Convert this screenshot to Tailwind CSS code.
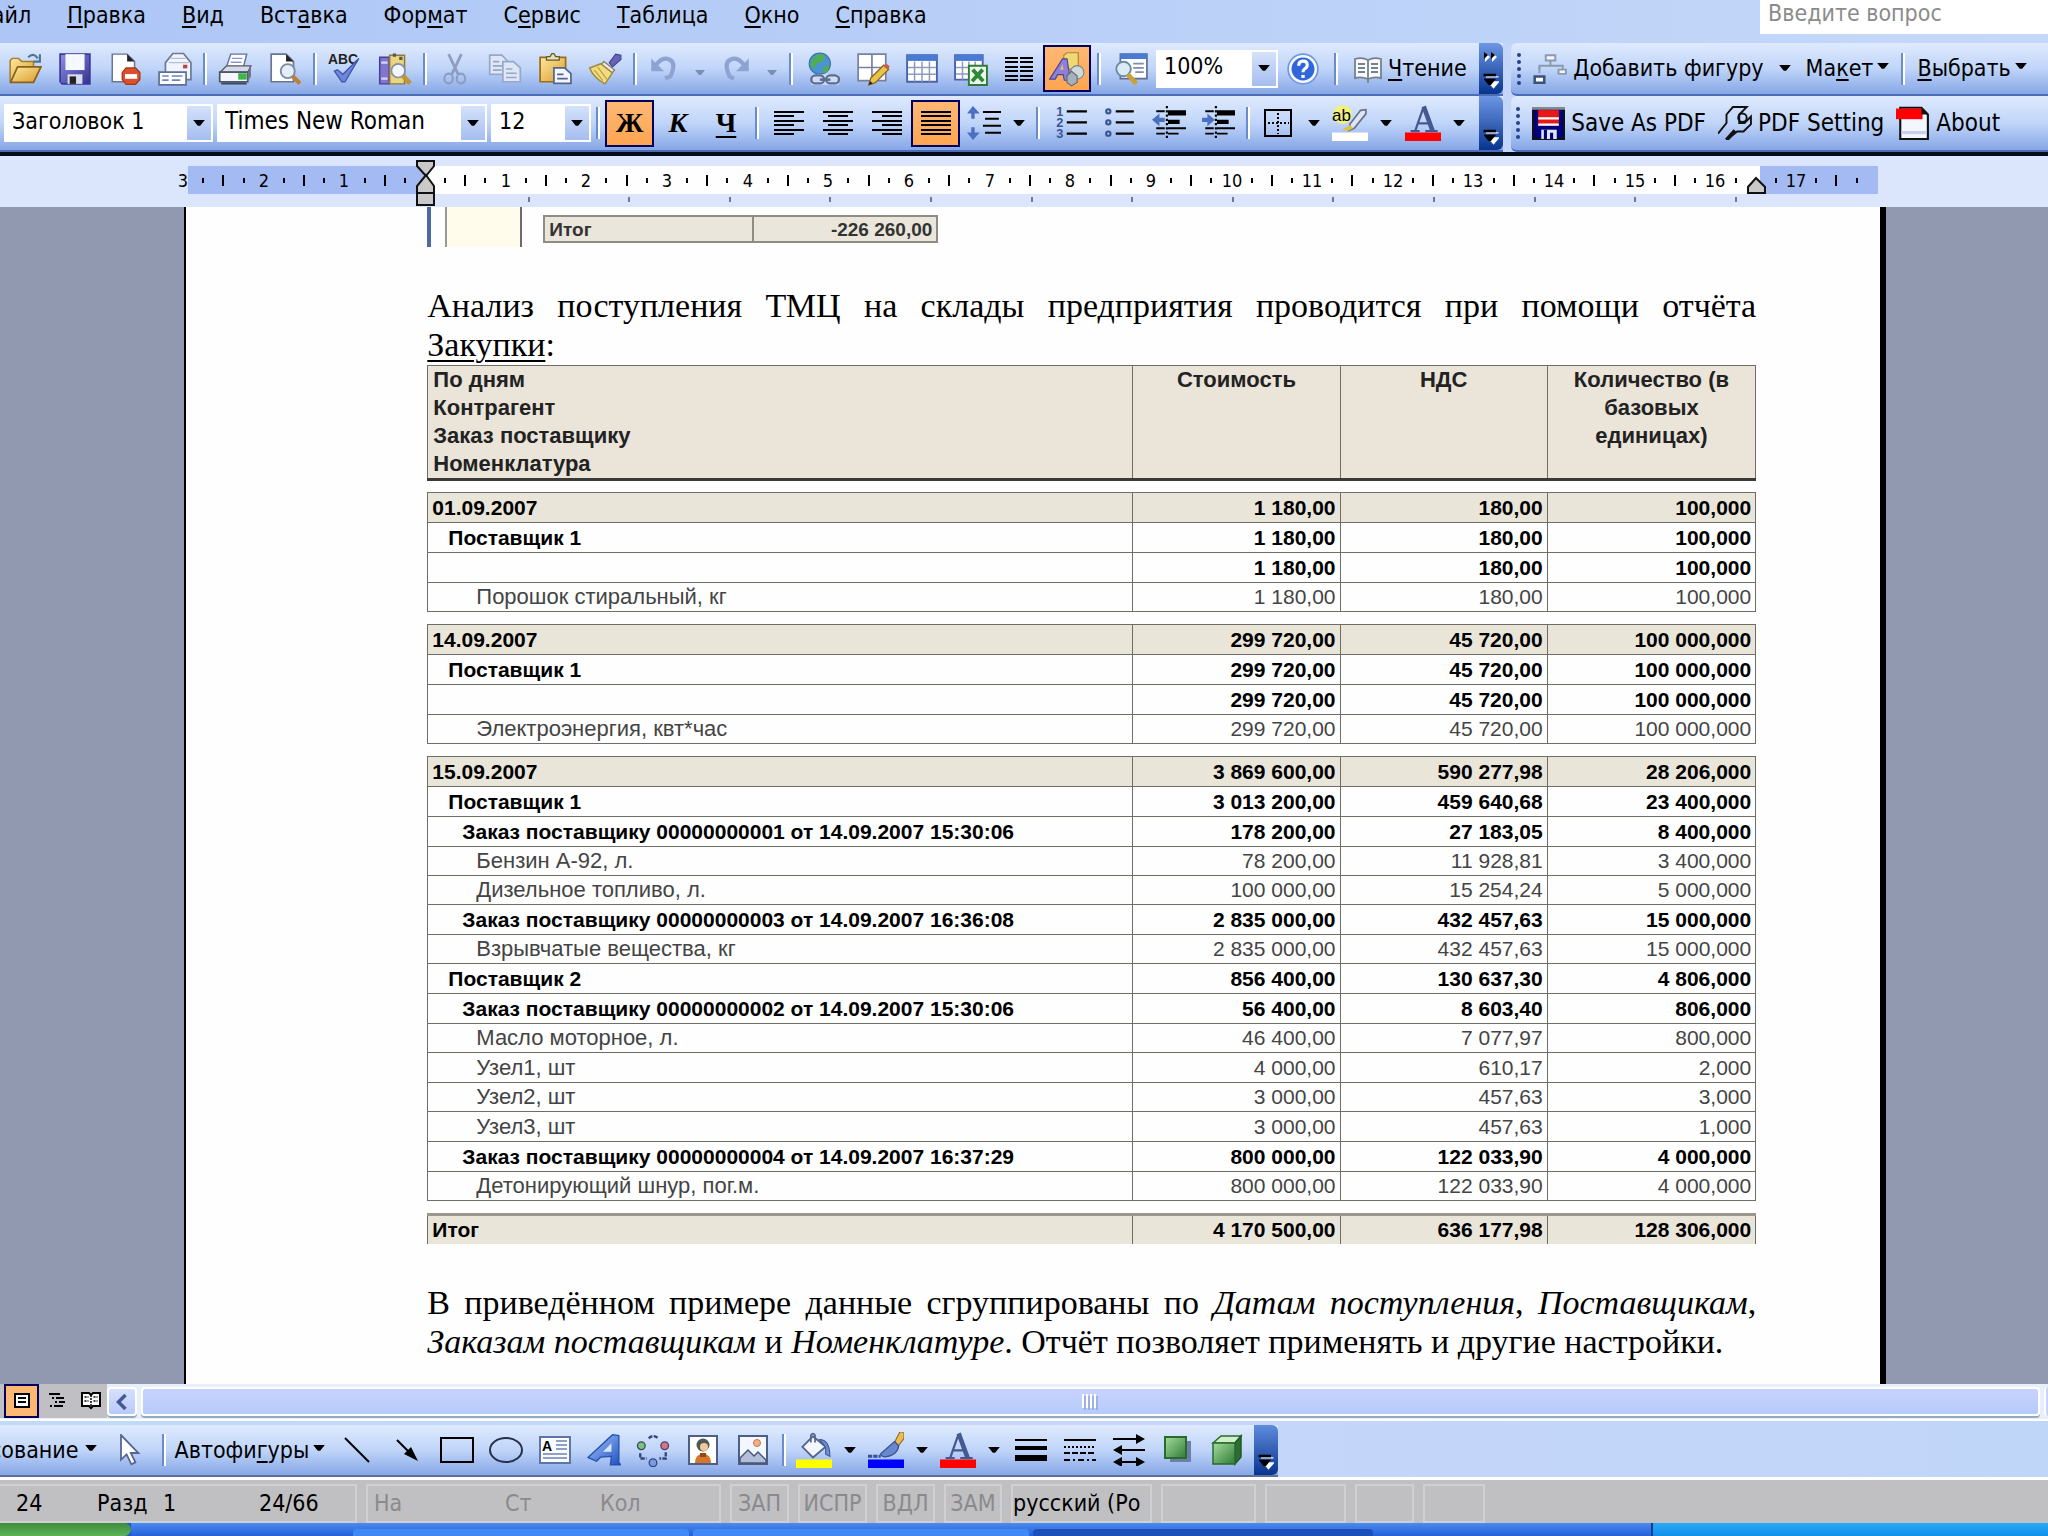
<!DOCTYPE html>
<html lang="ru">
<head>
    <meta charset="UTF-8">
    <meta name="viewport" content="width=device-width, initial-scale=1.0">
    <title>Анализ поступления ТМЦ - Microsoft Word</title>
    <script src="https://cdn.jsdelivr.net/npm/@tailwindcss/browser@4"></script>
</head>
<body class="h-screen flex flex-col overflow-hidden bg-[#c4d6f8] font-['DejaVu_Sans_Condensed','Liberation_Sans',sans-serif] text-[23px] leading-none text-black whitespace-nowrap">
    <!-- Shared symbols -->
    <svg class="absolute size-0">
        <defs>
            <linearGradient id="gold" x2="1" y2="1"><stop stop-color="#ffe9a0"/><stop offset="1" stop-color="#d99a2b"/></linearGradient>
            <linearGradient id="violet" x2="1" y2="1"><stop stop-color="#8f90e6"/><stop offset="1" stop-color="#33318f"/></linearGradient>
            <linearGradient id="green" x2="1" y2="1"><stop stop-color="#a5dc9c"/><stop offset="1" stop-color="#2f7a35"/></linearGradient>
            <linearGradient id="blue" x2="1" y2="1"><stop stop-color="#a9c6fb"/><stop offset="1" stop-color="#1d4fc0"/></linearGradient>
            <symbol id="arrow" viewBox="0 0 10 6"><path d="M0 0h10L6 5H4z"/></symbol>
            <symbol id="more" viewBox="0 0 12 16"><path d="M2 5h10v1H2zM3 9h10l-5 6z" fill="#fff"/><path d="M0 3h10v2H0zM0 7h10L6 12H4z" fill="#000"/></symbol>
            <symbol id="letterA" viewBox="0 0 16 12"><path d="M2.500 11.500h4M9 11.500h5.500M4.500 11.500L8 1.500M6 8h5" fill="none" stroke="#44598f" stroke-width="1"/><path d="M8.300 .5l4 11" stroke="#44598f" stroke-width="2"/></symbol>
        </defs>
    </svg>

    <!-- Menu -->
    <header class="flex h-[43px] items-start justify-between bg-linear-to-r from-[#adc6f6] to-[#c5d8f9]">
        <nav class="-ml-[26px] flex gap-9 pt-[3px] leading-6 underline-offset-3">
            <a href="#">Файл</a>
            <a href="#"><u>П</u>равка</a>
            <a href="#"><u>В</u>ид</a>
            <a href="#">Вст<u>а</u>вка</a>
            <a href="#">Фор<u>м</u>ат</a>
            <a href="#">С<u>е</u>рвис</a>
            <a href="#"><u>Т</u>аблица</a>
            <a href="#"><u>О</u>кно</a>
            <a href="#"><u>С</u>правка</a>
        </nav>
        <input type="text" aria-label="Введите вопрос" placeholder="Введите вопрос" class="h-[34px] w-[288px] bg-white px-2 pb-2 placeholder:text-[#8b8b8b]">
    </header>

    <!-- Toolbars, first row -->
    <div class="flex h-[53px] gap-2">
        <div class="flex w-[73.4%] shrink-0 items-center border-b-2 border-[#4a6db5] bg-linear-to-b from-[#dfeafe] via-[#c0d5f9] to-[#86a6e6]">
            <button aria-label="Открыть" class="grid h-full w-[50px] place-items-center"><svg class="size-[34px]" viewBox="0 0 16 16"><path d="M1 14V4l1-1h3l1.500 1.500H12V7" fill="url(#gold)" stroke="#a27b2c" stroke-width=".7"/><path d="M1.200 14.300L4.500 7h11L12 14.300z" fill="url(#gold)" stroke="#86621c" stroke-width=".8"/><path d="M9.500 2.500Q12 0 14 3M15 1v3.500h-3" fill="none" stroke="#4f7391" stroke-width="1"/></svg></button>
            <button aria-label="Сохранить" class="grid h-full w-[50px] place-items-center"><svg class="size-[34px]" viewBox="0 0 16 16"><path d="M1 1h14v14H2l-1-1z" fill="url(#violet)" stroke="#3a3a96" stroke-width=".8"/><path d="M3.500 1h9v7.500h-9z" fill="#f6f8ff"/><path d="M4.500 10.500h7V15h-7z" fill="#d9dcea"/><path d="M5.500 11.500h3V15h-3z" fill="#222"/></svg></button>
            <button aria-label="Разрешения" class="grid h-full w-[50px] place-items-center"><svg class="size-[34px]" viewBox="0 0 16 16"><path d="M2 1h7l3.500 3.500V14H2z" fill="#fff" stroke="#697591" stroke-width=".7"/><path d="M9 1v3.500h3.500z" fill="#222"/><path d="M8.500 7.500h4.500L15 9.700v3.300L13 15.200H8.500L6.700 13V9.700z" fill="#d9512f" stroke="#a93418" stroke-width=".6"/><path d="M8 10.400h5.700v2.200H8z" fill="#fff"/></svg></button>
            <button aria-label="Почта" class="grid h-full w-[50px] place-items-center"><svg class="size-[34px]" viewBox="0 0 16 16"><path d="M3.500 5L7 .7h5L15.500 5v8h-12z" fill="#f1f4fc" stroke="#6b7896" stroke-width=".8"/><path d="M5 5h9.500M6 3h7" stroke="#b3bfd8" stroke-width=".7"/><path d="M11.800 6h2v1.700h-2z" fill="#b04545"/><path d="M.5 9.500h12.700v6H.5z" fill="#fff" stroke="#5c6f94" stroke-width=".8"/><path d="M2 11.300h3M2 13.200h3M6.500 11.300h5M6.500 13.200h4" stroke="#6b86b8" stroke-width=".8"/></svg></button>
            <span class="flex w-[10px] justify-center"><i class="h-8 w-1 border-l-2 border-r-2 border-l-[#6a8ccb] border-r-white"></i></span>
            <button aria-label="Печать" class="grid h-full w-[50px] place-items-center"><svg class="size-[34px]" viewBox="0 0 16 16"><path d="M4 7l2-6h7.500L12 7z" fill="#fff" stroke="#6272a4" stroke-width=".7"/><path d="M6.500 3h5M6 4.800h5" stroke="#8c95c9" stroke-width=".7"/><path d="M1 9.500L4 6.500h11.500L14 9.500z" fill="#d4dbe9" stroke="#556" stroke-width=".6"/><path d="M.8 9.500H14V14H.8z" fill="#f4f6fb" stroke="#4b5566" stroke-width=".8"/><path d="M14 9.500l1.500-3v5L14 14z" fill="#6d7686"/><path d="M9.500 10h4v3h-4z" fill="#3fb54a"/><path d="M1.500 14.800h12" stroke="#3d4a5c" stroke-width="1"/></svg></button>
            <button aria-label="Предварительный просмотр" class="grid h-full w-[50px] place-items-center"><svg class="size-[34px]" viewBox="0 0 16 16"><path d="M1.500 1h7L12 4.500V14H1.500z" fill="#fff" stroke="#697591" stroke-width=".8"/><path d="M8.500 1v3.500H12z" fill="#222"/><circle cx="9.300" cy="9" r="3.300" fill="#e4edfa" stroke="#7c8aa5" stroke-width=".9"/><path d="M11.700 11.500l3.300 3.300" stroke="#c17e33" stroke-width="2"/></svg></button>
            <span class="flex w-[10px] justify-center"><i class="h-8 w-1 border-l-2 border-r-2 border-l-[#6a8ccb] border-r-white"></i></span>
            <button aria-label="Правописание" class="grid h-full w-[50px] place-items-center"><svg class="size-[34px]" viewBox="0 0 16 16"><text x="0" y="5.500" font-size="6.500" font-weight="bold" font-family="Liberation Sans" fill="#222">ABC</text><path d="M3 9l1.500-.7L7 10.500 14.500 3 8 14H6.500z" fill="#6f86da" stroke="#3f55ae" stroke-width=".6"/></svg></button>
            <button aria-label="Справочные материалы" class="grid h-full w-[50px] place-items-center"><svg class="size-[34px]" viewBox="0 0 16 16"><path d="M.8 2.500h4.500V15H.8z" fill="#8175cf" stroke="#483f96" stroke-width=".7"/><path d="M1.500 5h3M1.500 12.500h3" stroke="#d9d4ff"/><path d="M5.500 1.500h7V15h-7z" fill="#e9d582" stroke="#8e7a34" stroke-width=".7"/><path d="M7 1.500h1.500M10 3h1.500" stroke="#555" stroke-width="1.500"/><circle cx="9.500" cy="8.800" r="3.200" fill="#f3f6fd" stroke="#848fa8" stroke-width=".8"/><path d="M11.800 11.300l3.300 3.500" stroke="#c09335" stroke-width="2.200"/></svg></button>
            <span class="flex w-[10px] justify-center"><i class="h-8 w-1 border-l-2 border-r-2 border-l-[#6a8ccb] border-r-white"></i></span>
            <button aria-label="Вырезать" class="grid h-full w-[50px] place-items-center"><svg class="size-[34px]" viewBox="0 0 16 16" fill="none" stroke="#8d9dc0"><path d="M5 1l4.500 9.500M11 1L6.500 10.500" stroke-width="1.300"/><ellipse cx="5" cy="12.500" rx="2" ry="2.300"/><ellipse cx="10.800" cy="12.500" rx="2" ry="2.300"/></svg></button>
            <button aria-label="Копировать" class="grid h-full w-[50px] place-items-center"><svg class="size-[34px]" viewBox="0 0 16 16" fill="#dfe7f7" stroke="#98a7c8" stroke-width=".8"><path d="M.8 1.500h5.700L9 4v6.500H.8z"/><path d="M2.300 4.500h3M2.300 6.500h5M2.300 8.500h4"/><path d="M7 4.500h5L15.200 7.500V14H7z"/><path d="M8.500 8h3M8.500 10h5M8.500 12h5"/></svg></button>
            <button aria-label="Вставить" class="grid h-full w-[50px] place-items-center"><svg class="size-[34px]" viewBox="0 0 16 16"><path d="M1 2.500h12V14H1z" fill="url(#gold)" stroke="#9a6d16" stroke-width=".8"/><path d="M4 3.800V2.200h1.700L6.500.8h1l.8 1.400H10v1.600z" fill="#e7dfb8" stroke="#665a2d" stroke-width=".6"/><path d="M7.500 7.500h5l3 2.700v4.600h-8z" fill="#f4f7ff" stroke="#53648e" stroke-width=".8"/><path d="M9 10.500h3M9 12.500h5" stroke="#53648e" stroke-width=".8"/></svg></button>
            <button aria-label="Формат по образцу" class="grid h-full w-[50px] place-items-center"><svg class="size-[34px]" viewBox="0 0 16 16"><path d="M10 5l3-4 2.500.5v2L11.500 7z" fill="#6562b8" stroke="#46438d" stroke-width=".5"/><path d="M7.500 4.500L12.500 8.500l-1.300 1.500L6 6z" fill="#e8eaf5" stroke="#84805a" stroke-width=".6"/><path d="M6 5.500L.8 7.500Q2.500 12 8 15l3.500-5.200z" fill="#f1dc82" stroke="#a18a3a" stroke-width=".7"/><path d="M4.500 7l4.500 6M3 8.500l4 5" stroke="#b89b3d" stroke-width=".5"/></svg></button>
            <span class="flex w-[10px] justify-center"><i class="h-8 w-1 border-l-2 border-r-2 border-l-[#6a8ccb] border-r-white"></i></span>
            <button aria-label="Отменить" class="grid h-full w-[48px] place-items-center"><svg class="size-[34px]" viewBox="0 0 16 16" fill="none" stroke="#8ea3cf" stroke-width="2"><path d="M4 6.500Q7 2 10.500 3.500T11 11.500L8.500 12.500"/><path d="M2 3v6h6z" fill="#8ea3cf" stroke="none"/></svg></button>
            <button aria-label="Список отмены" class="grid h-full w-[24px] place-items-center fill-[#7d8db3] pt-2"><svg class="h-[6px] w-[12px]"><use href="#arrow"/></svg></button>
            <button aria-label="Вернуть" class="grid h-full w-[48px] place-items-center"><svg class="size-[34px]" viewBox="0 0 16 16" fill="none" stroke="#8ea3cf" stroke-width="2"><path d="M12 6.500Q9 2 5.500 3.500T5 11.500L7 12.500"/><path d="M14 3v6H8z" fill="#8ea3cf" stroke="none"/></svg></button>
            <button aria-label="Список возврата" class="grid h-full w-[24px] place-items-center fill-[#7d8db3] pt-2"><svg class="h-[6px] w-[12px]"><use href="#arrow"/></svg></button>
            <span class="flex w-[14px] justify-center"><i class="h-8 w-1 border-l-2 border-r-2 border-l-[#6a8ccb] border-r-white"></i></span>
            <button aria-label="Гиперссылка" class="grid h-full w-[50px] place-items-center"><svg class="size-[34px]" viewBox="0 0 16 16"><circle cx="6.500" cy="5.500" r="5" fill="#4a93d8" stroke="#3b6f9b" stroke-width=".5"/><path d="M3 3q3-3 6-1.500l-1 3-3 1-1 2.500-2-1.500zM8 7l3-1-1 3.500-2 .5z" fill="#4fae55"/><path d="M2.500 10.500h13v5h-13z" fill="#e9effc" opacity=".6"/><rect x="2.500" y="11" width="6" height="3.800" rx="1.900" fill="none" stroke="#5b6d92" stroke-width="1.100"/><rect x="9.500" y="11" width="6" height="3.800" rx="1.900" fill="none" stroke="#5b6d92" stroke-width="1.100"/><path d="M6.500 13h5" stroke="#5b6d92" stroke-width="1.200"/></svg></button>
            <button aria-label="Таблицы и границы" class="grid h-full w-[49px] place-items-center"><svg class="size-[34px]" viewBox="0 0 16 16"><path d="M1 1h13v12.500H1z" fill="#fff" stroke="#7782a0" stroke-width=".8"/><path d="M7.500 1v12.500M1 7.300h13" stroke="#7782a0" stroke-width=".8"/><path d="M6 15.500l1-3.300 6-6 2.300 2-6.200 6.200z" fill="#eac34c" stroke="#8b6b1b" stroke-width=".6"/><path d="M13 6.200l2.300 2 .5-1.500-1.500-1.200z" fill="#d05656"/><path d="M6 15.500l.6-1.900 1.300 1.200z" fill="#222"/></svg></button>
            <button aria-label="Добавить таблицу" class="grid h-full w-[49px] place-items-center"><svg class="size-[34px]" viewBox="0 0 16 16"><path d="M1 1.500h14V14H1z" fill="#fff" stroke="#4a63a5" stroke-width=".9"/><path d="M1 1.200h14v3H1z" fill="#4b79d6"/><path d="M1.500 7.300h13M1.500 10.500h13M4.500 4.500V14M8 4.500V14M11.500 4.500V14" stroke="#8d9abb" stroke-width=".7"/></svg></button>
            <button aria-label="Добавить таблицу Excel" class="grid h-full w-[49px] place-items-center"><svg class="size-[34px]" viewBox="0 0 16 16"><path d="M.5 1.500h13V13H.5z" fill="#fff" stroke="#4a63a5" stroke-width=".9"/><path d="M.5 1.200h13.200v3H.5z" fill="#4b79d6"/><path d="M1 7.300h12M1 10.300h12M4 4.500V13M7 4.500V13M10 4.500V13" stroke="#8d9abb" stroke-width=".7"/><path d="M7 6.500h8.500v9H7z" fill="#eef7ee" stroke="#2f7a35" stroke-width=".9"/><path d="M8.800 8.300l5 5.500M13.500 8.300l-5 5.500" stroke="#2f8a38" stroke-width="1.800"/></svg></button>
            <button aria-label="Колонки" class="grid h-full w-[48px] place-items-center"><svg class="h-[26px] w-7" viewBox="0 0 28 26" stroke="#000" stroke-width="2"><path d="M0 2h13M15 2h13M0 6h13M15 6h13M0 11h13M15 11h13M0 15h13M15 15h13M0 20h13M15 20h13M0 24h13M15 24h13"/></svg></button>
            <button aria-label="Рисование" aria-pressed="true" class="grid h-[47px] w-[48px] place-items-center border-2 border-[#000060] bg-linear-to-b from-[#fdb873] to-[#ffa551]"><svg class="size-[36px]" viewBox="0 0 16 16"><path d="M6.500 2L8 .8h5V7.500L7 8.500z" fill="#f0d873" stroke="#a3873a" stroke-width=".5"/><path d="M.3 12.500l5.700-9h2L9.500 13H6.800L6.300 10.500H3.800l-1 2z" fill="#8c80d8" stroke="#4b4399" stroke-width=".5"/><path d="M5 8.300l1-2.500.4 2.500z" fill="#fdb873"/><circle cx="12.500" cy="9.500" r="3" fill="#cfd8dc" stroke="#7a858b" stroke-width=".5"/><path d="M8 11l2-2 2.500 2v3L10 15.500 8 14z" fill="#a6b0b8" stroke="#667" stroke-width=".5"/></svg></button>
            <span class="flex w-[15px] justify-center"><i class="h-8 w-1 border-l-2 border-r-2 border-l-[#6a8ccb] border-r-white"></i></span>
            <button aria-label="Схема документа" class="grid h-full w-[50px] place-items-center"><svg class="size-[34px]" viewBox="0 0 16 16"><path d="M3 1h12.500v11.500H3z" fill="#fff" stroke="#5c6c97" stroke-width=".8"/><path d="M3 .8h12.500v2.500H3z" fill="#4b79d6"/><path d="M9 5.500h5M9 7.500h5M10 9.500h4" stroke="#7e8db0" stroke-width=".8"/><circle cx="4.500" cy="8" r="3.400" fill="#d8ebf7" stroke="#6f8aa3" stroke-width=".9"/><path d="M6.500 10.500l4 4.500" stroke="#c9a238" stroke-width="2.200"/></svg></button>
            <div class="relative h-[38px] w-[122px] bg-white">
                <select aria-label="Масштаб" class="h-full w-full appearance-none pl-2 pb-1"><option>100%</option></select>
                <span class="pointer-events-none absolute inset-y-[2px] right-[2px] grid w-6 place-items-center bg-linear-to-b from-[#d5e2fa] to-[#a5bdf0]"><svg class="h-[7px] w-[12px]"><use href="#arrow"/></svg></span>
            </div>
            <button aria-label="Справка" class="grid h-full w-[50px] place-items-center"><svg class="size-[34px]" viewBox="0 0 16 16"><circle cx="8" cy="8" r="7" fill="#f4f8ff" stroke="#6f96e2" stroke-width=".8"/><circle cx="8" cy="8" r="5.400" fill="#2f66d9"/><path d="M6 6.500Q6 4.300 8 4.300t2 1.800Q10 7.200 8.700 8 8 8.500 8 9.500" fill="none" stroke="#fff" stroke-width="1.500"/><path d="M7.200 10.800h1.600v1.400H7.200z" fill="#fff"/></svg></button>
            <span class="flex w-4 justify-center"><i class="h-8 w-1 border-l-2 border-r-2 border-l-[#6a8ccb] border-r-white"></i></span>
            <button class="flex h-full items-center gap-1 pl-2"><svg class="size-[32px]" viewBox="0 0 16 16"><path d="M1.500 3Q5 2 8 3.500 11 2 14.500 3v9.500Q11 11.700 8 13 5 11.700 1.500 12.500z" fill="#f8fafc" stroke="#76818f" stroke-width=".9"/><path d="M8 3.500V15M3 5.500h3.500M3 7.500h3.500M3 9.500h3.500M9.500 5.500H13M9.500 7.500H13M9.500 9.500H13" stroke="#76818f" stroke-width=".9"/></svg><span class="underline-offset-3"><u>Ч</u>тение</span></button>
            <button aria-label="Параметры панели" class="ml-auto flex h-full w-6 flex-col items-center justify-between rounded-r-md bg-linear-to-b from-[#6d97e4] to-[#08348f] pt-2 pb-1"><svg class="h-3 w-4" viewBox="0 0 16 12"><path d="M2 2l5 4-5 5zM9 2l5 4-5 5z" fill="#fff"/><path d="M1 1l4 3-4 4zM8 1l4 3-4 4z"/></svg><svg class="h-5 w-4"><use href="#more"/></svg></button>
        </div>
        <div class="flex min-w-0 flex-1 items-center rounded-l-md border-b-2 border-[#4a6db5] bg-linear-to-b from-[#dfeafe] via-[#c0d5f9] to-[#86a6e6] pl-[6px]">
            <i class="h-8 w-1 border-l-4 border-dotted border-[#27408b]"></i>
            <button class="ml-3 flex h-full items-center gap-[6px]"><svg class="size-[34px]" viewBox="0 0 16 16" fill="none" stroke="#8b99ad" stroke-width=".9"><path d="M6 1.500h4.500V4H6zM12 8.300h3.500v2H12z" fill="#f2f5fb"/><path d="M8.200 4v2.500M3 9V6.500h11V8"/><path d="M3 7v4" stroke-dasharray="1 1"/><path d="M.8 11.500h4.500v3H.8z" fill="#fff" stroke="#3c5278" stroke-width="1.200"/></svg><span class="underline-offset-3"><u>Д</u>обавить фигуру</span></button>
            <button aria-label="Фигуры" class="grid h-full w-[42px] place-items-center"><svg class="h-[7px] w-[12px]"><use href="#arrow"/></svg></button>
            <button class="flex h-full items-center gap-1 underline-offset-3"><span>Ма<u>к</u>ет</span><svg class="mb-1 h-[7px] w-[12px]"><use href="#arrow"/></svg></button>
            <span class="flex w-[28px] justify-center"><i class="h-8 w-1 border-l-2 border-r-2 border-l-[#6a8ccb] border-r-white"></i></span>
            <button class="flex h-full items-center gap-1 underline-offset-3"><span><u>В</u>ыбрать</span><svg class="mb-1 h-[7px] w-[12px]"><use href="#arrow"/></svg></button>
        </div>
    </div>

    <!-- Toolbars, second row -->
    <div class="flex h-[60px] gap-2 border-b-4 border-[#060b1c]">
        <div class="flex w-[73.4%] shrink-0 items-center border-b-2 border-[#4a6db5] bg-linear-to-b from-[#dfeafe] via-[#c0d5f9] to-[#86a6e6] pl-1">
            <div class="relative mr-1 h-[38px] w-[209px] bg-white">
                <select aria-label="Стиль" class="h-full w-full appearance-none pl-2 pb-1"><option>Заголовок 1</option></select>
                <span class="pointer-events-none absolute inset-y-[2px] right-[2px] grid w-6 place-items-center bg-linear-to-b from-[#d5e2fa] to-[#a5bdf0]"><svg class="h-[7px] w-[12px]"><use href="#arrow"/></svg></span>
            </div>
            <div class="relative mr-1 h-[38px] w-[270px] bg-white">
                <select aria-label="Шрифт" class="h-full w-full appearance-none pl-2 pb-1 text-2xl"><option>Times New Roman</option></select>
                <span class="pointer-events-none absolute inset-y-[2px] right-[2px] grid w-6 place-items-center bg-linear-to-b from-[#d5e2fa] to-[#a5bdf0]"><svg class="h-[7px] w-[12px]"><use href="#arrow"/></svg></span>
            </div>
            <div class="relative h-[38px] w-[100px] bg-white">
                <select aria-label="Размер" class="h-full w-full appearance-none pl-2 pb-1"><option>12</option></select>
                <span class="pointer-events-none absolute inset-y-[2px] right-[2px] grid w-6 place-items-center bg-linear-to-b from-[#d5e2fa] to-[#a5bdf0]"><svg class="h-[7px] w-[12px]"><use href="#arrow"/></svg></span>
            </div>
            <span class="flex w-[14px] justify-center"><i class="h-8 w-1 border-l-2 border-r-2 border-l-[#6a8ccb] border-r-white"></i></span>
            <button aria-label="Полужирный" aria-pressed="true" class="h-[47px] w-[49px] border-2 border-[#000060] bg-linear-to-b from-[#fdb873] to-[#ffa551] font-['Liberation_Serif',serif] text-[28px] font-bold">Ж</button>
            <button aria-label="Курсив" class="h-full w-[48px] font-['Liberation_Serif',serif] text-[28px] font-bold italic">К</button>
            <button aria-label="Подчеркнутый" class="h-full w-[48px] font-['Liberation_Serif',serif] text-[28px] font-bold underline decoration-2 underline-offset-4">Ч</button>
            <span class="flex w-[14px] justify-center"><i class="h-8 w-1 border-l-2 border-r-2 border-l-[#6a8ccb] border-r-white"></i></span>
            <button aria-label="По левому краю" class="grid h-full w-[49px] place-items-center"><svg class="h-[26px] w-[30px]" viewBox="0 0 30 26" stroke="#000" stroke-width="2"><path d="M0 2h30M0 6h20M0 11h30M0 15h20M0 20h30M0 24h20"/></svg></button>
            <button aria-label="По центру" class="grid h-full w-[49px] place-items-center"><svg class="h-[26px] w-[30px]" viewBox="0 0 30 26" stroke="#000" stroke-width="2"><path d="M0 2h30M5 6h20M0 11h30M5 15h20M0 20h30M5 24h20"/></svg></button>
            <button aria-label="По правому краю" class="grid h-full w-[49px] place-items-center"><svg class="h-[26px] w-[30px]" viewBox="0 0 30 26" stroke="#000" stroke-width="2"><path d="M0 2h30M10 6h20M0 11h30M10 15h20M0 20h30M10 24h20"/></svg></button>
            <button aria-label="По ширине" aria-pressed="true" class="grid h-[47px] w-[49px] place-items-center border-2 border-[#000060] bg-linear-to-b from-[#fdb873] to-[#ffa551]"><svg class="h-[26px] w-[30px]" viewBox="0 0 30 26" stroke="#000" stroke-width="2"><path d="M0 2h30M0 6h30M0 11h30M0 15h30M0 20h30M0 24h30"/></svg></button>
            <button aria-label="Междустрочный интервал" class="grid h-full w-[48px] place-items-center"><svg class="size-[34px]" viewBox="0 0 16 16"><path d="M2.800 0L6 3.500H3.600V6H2V3.500H0zM2.800 16L6 12.500H3.600V10H2v2.500H0z" fill="#4a70c4"/><path d="M7.500 2.800H16M8.500 6H15M7.500 9.300H16M8.500 12.600H16" stroke="#000" stroke-width="1"/></svg></button>
            <button aria-label="Интервалы" class="grid h-full w-[22px] place-items-center"><svg class="h-[7px] w-[12px]"><use href="#arrow"/></svg></button>
            <span class="flex w-4 justify-center"><i class="h-8 w-1 border-l-2 border-r-2 border-l-[#6a8ccb] border-r-white"></i></span>
            <button aria-label="Нумерация" class="grid h-full w-[49px] place-items-center"><svg class="size-[34px]" viewBox="0 0 16 16"><g font-size="6" font-weight="bold" font-family="Liberation Sans" fill="#3a5596"><text x="1" y="4.500">1</text><text x="1" y="9.800">2</text><text x="1" y="15">3</text></g><path d="M6 2.500h9.500M6 7.700h9.500M6 13h9.500" stroke="#000"/></svg></button>
            <button aria-label="Маркеры" class="grid h-full w-[49px] place-items-center"><svg class="size-[34px]" viewBox="0 0 16 16"><g fill="#b7caee" stroke="#3a5596" stroke-width="1"><circle cx="2.500" cy="2.500" r="1"/><circle cx="2.500" cy="7.700" r="1"/><circle cx="2.500" cy="13" r="1"/></g><path d="M6 2.500h8.500M6 7.700h8.500M6 13h8.500" stroke="#000"/></svg></button>
            <button aria-label="Уменьшить отступ" class="grid h-full w-[49px] place-items-center"><svg class="size-[34px]" viewBox="0 0 16 16"><path d="M2 2.500h4M2 10.500h4M2 13h4M7.500 10.500H16M7.500 13h5" stroke="#000" stroke-width=".9"/><path d="M7.500 2H16v2.500H7.500zM7.500 6.500h5.500v2H7.500z"/><path d="M7 0v16" stroke="#000" stroke-dasharray="1 1"/><path d="M0 6.500l3.500-3v2H6v2H3.500v2z" fill="#4a70c4"/></svg></button>
            <button aria-label="Увеличить отступ" class="grid h-full w-[49px] place-items-center"><svg class="size-[34px]" viewBox="0 0 16 16"><path d="M2 2.500h4M2 10.500h4M2 13h4M7.500 10.500H16M7.500 13h5" stroke="#000" stroke-width=".9"/><path d="M7.500 2H16v2.500H7.500zM7.500 6.500h5.500v2H7.500z"/><path d="M7 0v16" stroke="#000" stroke-dasharray="1 1"/><path d="M6.500 6.500L3 3.500v2H.5v2H3v2z" fill="#4a70c4"/></svg></button>
            <span class="flex w-[12px] justify-center"><i class="h-8 w-1 border-l-2 border-r-2 border-l-[#6a8ccb] border-r-white"></i></span>
            <button aria-label="Границы" class="grid h-full w-[48px] place-items-center"><svg class="size-[28px]" viewBox="0 0 28 28" fill="none" stroke="#000" stroke-width="2"><path d="M1 1h26v26H1z"/><path d="M14 4v21M4 14h21" stroke-dasharray="2 2"/></svg></button>
            <button aria-label="Виды границ" class="grid h-full w-[24px] place-items-center"><svg class="h-[7px] w-[12px]"><use href="#arrow"/></svg></button>
            <button aria-label="Выделение цветом" class="grid h-full w-[48px] place-items-center"><svg class="size-[36px]" viewBox="0 0 17 17"><circle cx="5" cy="4.500" r="4.500" fill="#f2f07c"/><text x="0" y="7.500" font-size="8" font-family="Liberation Sans">ab</text><path d="M8.500 9l5-6.500 2.500-.3v2L10.500 11l-2.500 1z" fill="#dfe5f3" stroke="#667088" stroke-width=".8"/><path d="M5 11.500l3.500-2 1.500 1.500-3 1.500z" fill="#d7c24c"/><path d="M0 13h17v4H0z" fill="#fff"/></svg></button>
            <button aria-label="Цвет выделения" class="grid h-full w-[24px] place-items-center"><svg class="h-[7px] w-[12px]"><use href="#arrow"/></svg></button>
            <button aria-label="Цвет шрифта" class="grid h-full w-[50px] place-items-center"><svg class="size-[36px]" viewBox="0 0 17 17"><use href="#letterA" width="17" height="13"/><path d="M0 13h17v4H0z" fill="#f00"/></svg></button>
            <button aria-label="Цвета шрифта" class="grid h-full w-[22px] place-items-center"><svg class="h-[7px] w-[12px]"><use href="#arrow"/></svg></button>
            <button aria-label="Параметры панели" class="ml-auto flex h-full w-6 items-end justify-center rounded-r-md bg-linear-to-b from-[#6d97e4] to-[#08348f] pb-1"><svg class="h-5 w-4"><use href="#more"/></svg></button>
        </div>
        <div class="flex min-w-0 flex-1 items-center rounded-l-md border-b-2 border-[#4a6db5] bg-linear-to-b from-[#dfeafe] via-[#c0d5f9] to-[#86a6e6] pl-[5px] text-2xl">
            <i class="h-8 w-1 border-l-4 border-dotted border-[#27408b]"></i>
            <button class="ml-3 flex h-full items-center gap-[6px]"><svg class="size-[33px]" viewBox="0 0 16 16"><path d="M.5.500h15v15H.5z" fill="#00007c" stroke="#111"/><path d="M0 0h16v1.300H0z" fill="#888"/><path d="M3 1.500h10V9H3z" fill="#e81818"/><path d="M3 5.500h10M3 8.500h10" stroke="#fff" stroke-width="1.100"/><path d="M4.500 11H12v4.500H4.500z" fill="#dfe3f5"/><path d="M6.500 11v4.500M9.500 12.500v3" stroke="#00007c" stroke-width="1.500"/></svg>Save As PDF</button>
            <button class="ml-3 flex h-full items-center gap-[6px]"><svg class="size-[34px]" viewBox="0 0 16 16" fill="none" stroke="#111" stroke-width=".9"><path d="M0 13l4-5V4L7 .5h6.500L10 4v4h2.500L15.500 5v3.500L12 12H9L4 16"/><circle cx="11.500" cy="5.500" r="2"/><path d="M8 11.500L4 16" stroke-width="1.800"/></svg>PDF Setting</button>
            <button class="ml-3 flex h-full items-center gap-[6px]"><svg class="size-[34px]" viewBox="0 0 16 16"><path d="M2 .8h10L15 4v11.500H2z" fill="#f4f6fd" stroke="#111" stroke-width="1"/><path d="M0 1.200h12.500v5H0z" fill="#f00"/><path d="M12 .8V4h3z" fill="#111"/><path d="M2.500 12.500h12" stroke="#c5cff0" stroke-width="1.500"/></svg>About</button>
        </div>
    </div>

    <!-- Ruler -->
    <div class="h-[51px] bg-[#dbe6fd]"><svg id="ruler" class="h-full w-full font-['DejaVu_Sans_Condensed','Liberation_Sans',sans-serif] text-[18px]"></svg></div>

    <!-- Document -->
    <main class="flex min-h-0 flex-1 overflow-hidden bg-[#9099b0]">
        <article class="ml-[9%] w-[83.100%] border-l-2 border-r-[6px] border-black bg-[#fefefe] pl-[241px] pr-[124px]">
            <div class="flex h-10">
                <div class="w-5 border-l-4 border-r-2 border-l-[#4c6a9e] border-r-[#9a9a94]"></div>
                <div class="w-[75px] border-r-2 border-[#6b6b70] bg-[#fffcec]"></div>
                <table class="ml-[21px] mt-2 h-[28px] w-[395px] border-collapse border-2 border-[#8f8c84] bg-[#eae6dc] font-['Liberation_Sans',sans-serif] text-[19px] font-bold text-[#333]">
                    <tbody><tr><td class="w-[53%] border-r-2 border-[#8f8c84] pl-1">Итог</td><td class="pr-1 text-right">-226 260,00</td></tr></tbody>
                </table>
            </div>
            <p class="mt-[39px] h-[79px] font-['Liberation_Serif',serif] text-[34px] leading-[39px]">
                <span class="block whitespace-normal [text-align-last:justify]">Анализ поступления ТМЦ на склады предприятия проводится при помощи отчёта</span>
                <u class="decoration-2 underline-offset-4">Закупки</u>:
            </p>

            <table class="w-full table-fixed border-collapse font-['Liberation_Sans',sans-serif] text-[21px] leading-[28px] [&_td]:border [&_td]:border-[#6f6d66] [&_td]:px-1 [&_td]:py-0 [&_td+td]:text-right [&_th]:border [&_th]:border-[#6f6d66] [&_th]:px-[5px] [&_th]:align-top">
                <colgroup><col class="w-[53.100%]"><col class="w-[15.600%]"><col class="w-[15.600%]"><col></colgroup>
                <thead class="bg-[#eae4d9] text-[22px] text-[#222]">
                    <tr class="h-[113px] border-b-3 border-[#3c3a36]">
                        <th class="text-left">По дням<br>Контрагент<br>Заказ поставщику<br>Номенклатура</th>
                        <th>Стоимость</th>
                        <th>НДС</th>
                        <th class="whitespace-normal">Количество (в базовых единицах)</th>
                    </tr>
                </thead>
                <tbody class="before:block before:h-[11px] [&_tr]:h-[30px] [&_tr]:font-bold [&_tr:last-child]:h-[29px] [&_tr:last-child]:font-normal [&_tr:last-child]:text-[#444]">
                    <tr class="bg-[#e9e5d9]"><td>01.09.2007</td><td>1 180,00</td><td>180,00</td><td>100,000</td></tr>
                    <tr><td><span class="pl-4">Поставщик 1</span></td><td>1 180,00</td><td>180,00</td><td>100,000</td></tr>
                    <tr><td></td><td>1 180,00</td><td>180,00</td><td>100,000</td></tr>
                    <tr><td><span class="pl-11 text-[22px]">Порошок стиральный, кг</span></td><td>1 180,00</td><td>180,00</td><td>100,000</td></tr>
                </tbody>
                <tbody class="before:block before:h-[12px] [&_tr]:h-[30px] [&_tr]:font-bold [&_tr:last-child]:h-[29px] [&_tr:last-child]:font-normal [&_tr:last-child]:text-[#444]">
                    <tr class="bg-[#e9e5d9]"><td>14.09.2007</td><td>299 720,00</td><td>45 720,00</td><td>100 000,000</td></tr>
                    <tr><td><span class="pl-4">Поставщик 1</span></td><td>299 720,00</td><td>45 720,00</td><td>100 000,000</td></tr>
                    <tr><td></td><td>299 720,00</td><td>45 720,00</td><td>100 000,000</td></tr>
                    <tr><td><span class="pl-11 text-[22px]">Электроэнергия, квт*час</span></td><td>299 720,00</td><td>45 720,00</td><td>100 000,000</td></tr>
                </tbody>
                <tbody class="before:block before:h-[12px]">
                    <tr class="h-[30px] bg-[#e9e5d9] font-bold"><td>15.09.2007</td><td>3 869 600,00</td><td>590 277,98</td><td>28 206,000</td></tr>
                    <tr class="h-[30px] font-bold"><td><span class="pl-4">Поставщик 1</span></td><td>3 013 200,00</td><td>459 640,68</td><td>23 400,000</td></tr>
                    <tr class="h-[30px] font-bold"><td><span class="pl-[30px]">Заказ поставщику 00000000001 от 14.09.2007 15:30:06</span></td><td>178 200,00</td><td>27 183,05</td><td>8 400,000</td></tr>
                    <tr class="h-[29px] text-[#444]"><td><span class="pl-11 text-[22px]">Бензин А-92, л.</span></td><td>78 200,00</td><td>11 928,81</td><td>3 400,000</td></tr>
                    <tr class="h-[29px] text-[#444]"><td><span class="pl-11 text-[22px]">Дизельное топливо, л.</span></td><td>100 000,00</td><td>15 254,24</td><td>5 000,000</td></tr>
                    <tr class="h-[30px] font-bold"><td><span class="pl-[30px]">Заказ поставщику 00000000003 от 14.09.2007 16:36:08</span></td><td>2 835 000,00</td><td>432 457,63</td><td>15 000,000</td></tr>
                    <tr class="h-[29px] text-[#444]"><td><span class="pl-11 text-[22px]">Взрывчатые вещества, кг</span></td><td>2 835 000,00</td><td>432 457,63</td><td>15 000,000</td></tr>
                    <tr class="h-[30px] font-bold"><td><span class="pl-4">Поставщик 2</span></td><td>856 400,00</td><td>130 637,30</td><td>4 806,000</td></tr>
                    <tr class="h-[30px] font-bold"><td><span class="pl-[30px]">Заказ поставщику 00000000002 от 14.09.2007 15:30:06</span></td><td>56 400,00</td><td>8 603,40</td><td>806,000</td></tr>
                    <tr class="h-[29px] text-[#444]"><td><span class="pl-11 text-[22px]">Масло моторное, л.</span></td><td>46 400,00</td><td>7 077,97</td><td>800,000</td></tr>
                    <tr class="h-[30px] text-[#444]"><td><span class="pl-11 text-[22px]">Узел1, шт</span></td><td>4 000,00</td><td>610,17</td><td>2,000</td></tr>
                    <tr class="h-[29px] text-[#444]"><td><span class="pl-11 text-[22px]">Узел2, шт</span></td><td>3 000,00</td><td>457,63</td><td>3,000</td></tr>
                    <tr class="h-[30px] text-[#444]"><td><span class="pl-11 text-[22px]">Узел3, шт</span></td><td>3 000,00</td><td>457,63</td><td>1,000</td></tr>
                    <tr class="h-[30px] font-bold"><td><span class="pl-[30px]">Заказ поставщику 00000000004 от 14.09.2007 16:37:29</span></td><td>800 000,00</td><td>122 033,90</td><td>4 000,000</td></tr>
                    <tr class="h-[29px] text-[#444]"><td><span class="pl-11 text-[22px]">Детонирующий шнур, пог.м.</span></td><td>800 000,00</td><td>122 033,90</td><td>4 000,000</td></tr>
                </tbody>
                <tfoot class="before:block before:h-[12px]">
                    <tr class="h-[29px] border-t-3 border-[#9a978e] bg-[#e9e5d9] font-bold [&>td]:border-b-0!"><td>Итог</td><td>4 170 500,00</td><td>636 177,98</td><td>128 306,000</td></tr>
                </tfoot>
            </table>

            <p class="mt-[39px] whitespace-normal text-justify font-['Liberation_Serif',serif] text-[34px] leading-[39px]">В приведённом примере данные сгруппированы по <em>Датам поступления</em>, <em>Поставщикам</em>, <em>Заказам поставщикам</em> и <em>Номенклатуре</em>. Отчёт позволяет применять и другие настройки.</p>
        </article>
    </main>

    <!-- View buttons and horizontal scroll bar -->
    <div class="flex h-[37px] items-start border-b-2 border-white bg-[#e6effa]">
        <div class="flex h-[34px] items-center bg-[#c0c0c4] pl-1">
            <button aria-label="Разметка страницы" aria-pressed="true" class="grid h-[34px] w-[35px] place-items-center border-2 border-[#000060] bg-[#fdb873]"><svg class="size-[18px]" viewBox="0 0 18 18"><path d="M2 2h14v13H2z" fill="#fff" stroke="#000" stroke-width="2"/><path d="M5 6h8M5 10h8" stroke="#000" stroke-width="2"/></svg></button>
            <button aria-label="Структура" class="grid h-[34px] w-[35px] place-items-center"><svg class="size-[18px]" viewBox="0 0 18 18" stroke="#000" stroke-width="2"><path d="M1 2h11M4 6h2M8 6h8M7 10h2M11 10h6M2 14h2M6 14h9"/></svg></button>
            <button aria-label="Режим чтения" class="grid h-[34px] w-[33px] place-items-center"><svg class="size-5" viewBox="0 0 20 20"><path d="M1 2h7l2 2 2-2h7v13h-7l-2 2-2-2H1z" fill="#fff" stroke="#000" stroke-width="2"/><path d="M10 4v15M3.500 6h4M3.500 10h4M12.500 6h4M12.500 10h4" stroke="#000" stroke-width="1.500" stroke-dasharray="2 1"/></svg></button>
        </div>
        <button aria-label="Прокрутить влево" class="mt-[3px] grid h-[29px] w-[30px] place-items-center rounded border-2 border-white bg-linear-to-b from-[#d6e0fe] to-[#b8cafb] shadow-[0_2px_0_#93a9bd]"><svg class="h-[18px] w-[14px]" viewBox="0 0 16 20"><path d="M12 2L4 10l8 8" fill="none" stroke="#44598f" stroke-width="4"/></svg></button>
        <div class="mx-1 mt-[3px] grid h-[29px] flex-1 place-items-center rounded border-2 border-white bg-linear-to-b from-[#c8d3fc] to-[#b6cafb] shadow-[0_2px_0_#93a9bd]"><svg class="h-4 w-[18px]" viewBox="0 0 18 16"><path d="M1 0v14M5 0v14M9 0v14M13 0v14" stroke="#fff" stroke-width="2"/><path d="M3 2v14M7 2v14M11 2v14M15 2v14" stroke="#8fa8e6" stroke-width="1.500"/></svg></div>
        <div class="mt-[3px] h-[29px] w-1 rounded-l border-l-2 border-white bg-[#c8d3fc]"></div>
    </div>

    <!-- Drawing toolbar -->
    <div class="flex h-[59px] border-b-3 border-white bg-linear-to-r from-[#c0daf8] via-[#c5d6fa] to-[#c0d6f8]">
        <div class="mt-1 flex w-[62.400%] items-center border-b-2 border-[#5b7199] bg-linear-to-b from-[#dfeafe] via-[#c0d5f9] to-[#86a6e6]">
            <button class="-ml-[36px] flex h-full items-center gap-[6px]">Рисование<svg class="mb-1 h-[7px] w-[12px]"><use href="#arrow"/></svg></button>
            <button aria-label="Выбор объектов" class="ml-2 grid h-full w-[48px] place-items-center"><svg class="size-[32px]" viewBox="0 0 16 16"><path d="M4 0.500v12.300l2.800-2.600 2.400 5 2-1-2.300-4.700h3.800z" fill="#fff" stroke="#56668f" stroke-width=".9"/></svg></button>
            <span class="flex w-[22px] justify-center"><i class="h-8 w-1 border-l-2 border-r-2 border-l-[#6a8ccb] border-r-white"></i></span>
            <button class="flex h-full w-[157px] items-center gap-1 underline-offset-3"><span>Автофи<u>г</u>уры</span><svg class="mb-1 h-[7px] w-[12px]"><use href="#arrow"/></svg></button>
            <button aria-label="Линия" class="grid h-full w-[50px] place-items-center"><svg class="size-[26px]" viewBox="0 0 26 26"><path d="M1 1l24 24" stroke="#000" stroke-width="2"/></svg></button>
            <button aria-label="Стрелка" class="grid h-full w-[50px] place-items-center"><svg class="size-[22px]" viewBox="0 0 22 22"><path d="M1 1l14 14" stroke="#000" stroke-width="2"/><path d="M22 22L8 15l7-7z"/></svg></button>
            <button aria-label="Прямоугольник" class="grid h-full w-[50px] place-items-center"><svg class="h-[26px] w-[34px]" viewBox="0 0 34 26"><path d="M1 1h32v24H1z" fill="none" stroke="#000" stroke-width="2"/></svg></button>
            <button aria-label="Овал" class="grid h-full w-[49px] place-items-center"><svg class="h-[26px] w-[34px]" viewBox="0 0 34 26"><ellipse cx="17" cy="13" rx="16" ry="12" fill="none" stroke="#27304a" stroke-width="2"/></svg></button>
            <button aria-label="Надпись" class="grid h-full w-[49px] place-items-center"><svg class="h-7 w-8" viewBox="0 0 32 28"><path d="M1 1h30v26H1z" fill="#f9fbff" stroke="#5d76a8" stroke-width="2"/><path d="M17 5h11M17 9h11M17 13h11M4 18h24M4 22h24" stroke="#8fa0c4" stroke-width="2"/><text x="3" y="15" font-size="14" font-weight="bold" font-family="Liberation Sans">A</text></svg></button>
            <button aria-label="Объект WordArt" class="grid h-full w-[49px] place-items-center"><svg class="size-[34px]" viewBox="0 0 16 16"><path d="M.5 11.500L12 .8l3 .4V14l1 1h-5l.5-4-5 .3-2 2z" fill="url(#blue)" stroke="#234fae" stroke-width=".6"/><path d="M7.500 8.800l4-4v4z" fill="#d8e6fc"/></svg></button>
            <button aria-label="Диаграмма" class="grid h-full w-[49px] place-items-center"><svg class="size-[34px]" viewBox="0 0 16 16"><path d="M6 2.500Q8 .5 10.500 2.500M14 9v3h-3M2 9.500V12h3" fill="none" stroke="#33457a" stroke-width="1.100" stroke-dasharray="2 .6"/><circle cx="2.500" cy="6" r="1.800" fill="#7ec46d" stroke="#33457a" stroke-width=".6"/><circle cx="13.500" cy="6" r="1.800" fill="#e2707d" stroke="#33457a" stroke-width=".6"/><circle cx="8" cy="14" r="1.800" fill="#7c9be6" stroke="#33457a" stroke-width=".6"/></svg></button>
            <button aria-label="Картинка" class="grid h-full w-[50px] place-items-center"><svg class="size-[30px]" viewBox="0 0 30 30"><path d="M1 1h28v28H1z" fill="#fff" stroke="#4d5f87" stroke-width="2"/><circle cx="15" cy="10" r="6.500" fill="#4b5a52"/><circle cx="16" cy="12" r="4" fill="#f1c79a"/><path d="M7 28q0-9 8-9t8 9z" fill="#d5762b"/><path d="M12 18h6v4h-6z" fill="#8d4b1b"/></svg></button>
            <button aria-label="Рисунок" class="grid h-full w-[50px] place-items-center"><svg class="size-[30px]" viewBox="0 0 30 30"><path d="M1 1h28v28H1z" fill="#f3f7ff" stroke="#4d5f87" stroke-width="2"/><circle cx="19" cy="8" r="3.500" fill="#f2b183" stroke="#c7744b"/><path d="M2 23l8-8 6 6 4-4 8 8v3H2z" fill="#b3bfd9" stroke="#4a5878" stroke-width="1.500"/></svg></button>
            <span class="flex w-3 justify-center"><i class="h-8 w-1 border-l-2 border-r-2 border-l-[#6a8ccb] border-r-white"></i></span>
            <button aria-label="Цвет заливки" class="grid h-full w-[48px] place-items-center"><svg class="size-[36px]" viewBox="0 0 17 17"><path d="M3 7l5-5 6 5-6 5z" fill="#f3f7fd" stroke="#56648a" stroke-width=".9"/><path d="M7 5V1.500q1-1.500 2 0V5" fill="none" stroke="#56648a" stroke-width=".8"/><path d="M11 3.500q5 0 5 8l-2-1V7z" fill="#6d8fd6" stroke="#3e5794" stroke-width=".5"/><path d="M0 13h17v4H0z" fill="#ff0"/></svg></button>
            <button aria-label="Цвета заливки" class="grid h-full w-6 place-items-center"><svg class="h-[7px] w-[12px]"><use href="#arrow"/></svg></button>
            <button aria-label="Цвет линий" class="grid h-full w-[48px] place-items-center"><svg class="size-[36px]" viewBox="0 0 17 17"><path d="M12.500 5l2.500-5h2v3l-3 4z" fill="#edbb52" stroke="#8d6a20" stroke-width=".5"/><path d="M12.500 4.500l2 2Q14 11 8 11.800q-2-.3-2-1.500z" fill="#6787cf" stroke="#36528f" stroke-width=".6"/><path d="M0 11.500h6" stroke="#36528f" stroke-width="1.400" stroke-dasharray="2 .5"/><path d="M0 13h17v4H0z" fill="#00f"/></svg></button>
            <button aria-label="Цвета линий" class="grid h-full w-6 place-items-center"><svg class="h-[7px] w-[12px]"><use href="#arrow"/></svg></button>
            <button aria-label="Цвет шрифта" class="grid h-full w-[48px] place-items-center"><svg class="size-[36px]" viewBox="0 0 17 17"><use href="#letterA" width="17" height="13"/><path d="M0 13h17v4H0z" fill="#f00"/></svg></button>
            <button aria-label="Цвета шрифта" class="grid h-full w-6 place-items-center"><svg class="h-[7px] w-[12px]"><use href="#arrow"/></svg></button>
            <button aria-label="Тип линии" class="grid h-full w-[50px] place-items-center"><svg class="h-[24px] w-[32px]" viewBox="0 0 32 24"><path d="M0 1h32v2H0zM0 8h32v4H0zM0 17h32v6H0z"/></svg></button>
            <button aria-label="Тип штриха" class="grid h-full w-[49px] place-items-center"><svg class="h-[24px] w-[32px]" viewBox="0 0 32 24" stroke="#000" stroke-width="2"><path d="M0 2h32"/><path d="M0 9h32" stroke-dasharray="2 2"/><path d="M0 15h32" stroke-dasharray="6 2"/><path d="M0 22h32" stroke-dasharray="6 3 2 3"/></svg></button>
            <button aria-label="Вид стрелки" class="grid h-full w-[49px] place-items-center"><svg class="size-8" viewBox="0 0 32 32"><path d="M0 5h26M6 16h26M6 28h20" stroke="#000" stroke-width="2"/><path d="M32 5l-9-5v10zM0 16l9-5v10zM0 28l9-5v10zM32 28l-9-5v10z"/></svg></button>
            <button aria-label="Тень" class="grid h-full w-[49px] place-items-center"><svg class="size-[30px]" viewBox="0 0 30 30"><path d="M7 6h21v21H7z" fill="#6d7fa8"/><path d="M2 2h21v21H2z" fill="url(#green)" stroke="#276b2d" stroke-width="2"/></svg></button>
            <button aria-label="Объем" class="grid h-full w-[49px] place-items-center"><svg class="size-[32px]" viewBox="0 0 32 32"><path d="M2 9l8-7h20l-6 7z" fill="#cfeec9" stroke="#276b2d" stroke-width="1.500"/><path d="M24 9l6-7v21l-6 7z" fill="#2c6e31" stroke="#1f5a25" stroke-width="1.500"/><path d="M2 9h22v21H2z" fill="url(#green)" stroke="#276b2d" stroke-width="1.500"/></svg></button>
            <button aria-label="Параметры панели" class="ml-auto flex h-full w-6 items-end justify-center rounded-r-md bg-linear-to-b from-[#5f8cdc] to-[#08348f] pb-1"><svg class="h-5 w-4"><use href="#more"/></svg></button>
        </div>
    </div>

    <!-- Status bar -->
    <footer class="flex h-[43px] items-stretch gap-[9px] bg-[#c0c0c2] pt-1 leading-[35px] text-[#8a8a8c] [&>span]:border-2 [&>span]:border-[#d0d0d2]">
        <span class="flex w-[357px] border-l-0! text-black"><b class="w-[97px] pl-4 font-normal">24</b><b class="w-[66px] font-normal">Разд</b><b class="w-[96px] font-normal">1</b>24/66</span>
        <span class="flex w-[355px] pl-[6px]"><b class="w-[131px] font-normal">На</b><b class="w-[95px] font-normal">Ст</b>Кол</span>
        <span class="w-[59px] text-center">ЗАП</span>
        <span class="w-[69px] text-center">ИСПР</span>
        <span class="w-[59px] text-center">ВДЛ</span>
        <span class="w-[58px] text-center">ЗАМ</span>
        <span class="w-[141px] text-black">русский (Ро</span>
        <span class="w-[95px]"></span>
        <span class="w-[81px]"></span>
        <span class="w-[59px]"></span>
        <span class="w-[62px]"></span>
    </footer>

    <!-- Task bar -->
    <div class="flex h-[13px] bg-[#1f56cf]">
        <div class="w-[131px] rounded-r-lg bg-linear-to-b from-[#3f8a3f] to-[#5cb457]"></div>
        <div class="flex flex-1 items-end bg-linear-to-b from-[#4a8af0] to-[#2460d8]">
            <div class="ml-[222px] h-[7px] w-[336px] rounded-t bg-[#4088f5]"></div>
            <div class="ml-1 h-[7px] w-[336px] rounded-t bg-[#4088f5]"></div>
            <div class="ml-1 h-[7px] w-[340px] rounded-t bg-[#1c50b8]"></div>
        </div>
        <div class="w-[19.400%] border-l-2 border-[#0a3f8f] bg-linear-to-b from-[#2aa8f8] to-[#1090ea]"></div>
    </div>

    <script>
        // Ruler: one centimetre is 80.65px, zero stands at the left margin of the text
        const ruler = document.getElementById('ruler');
        const zero = 425;
        const cm = 80.65;
        let marks = '<rect x="188" y="10" width="237" height="28" fill="#a3bbf2"/>'
            + '<rect x="425" y="10" width="1335" height="28" fill="#fefefe"/>'
            + '<rect x="1760" y="10" width="118" height="28" fill="#a3bbf2"/>';

        for (let q = -11; q <= 71; q++) {
            const x = Math.round(zero + q * cm / 4);
            if (q === 0 || q === 66) continue;
            if (q % 4 === 0) {
                marks += `<text x="${x}" y="31" text-anchor="middle">${Math.abs(q / 4)}</text>`;
            } else if (q % 2 === 0) {
                marks += `<rect x="${x - 1}" y="19" width="2" height="11"/>`;
            } else {
                marks += `<rect x="${x - 1}" y="22" width="2" height="5"/>`;
            }
        }
        marks += `<text x="183" y="31" text-anchor="middle">3</text>`;

        // Default tab stops
        for (let t = 1; t <= 13; t++) {
            marks += `<rect x="${Math.round(427 + t * 100.6)}" y="41" width="2" height="5" fill="#6d7b99"/>`;
        }

        // Indent markers
        marks += '<g fill="#c9c9c9" stroke="#111" stroke-width="2">'
            + '<path d="M417 5h17v5l-8 10-9-10z"/><path d="M426 19l8 11v7h-17v-7z"/><path d="M417 37h17v12h-17z"/>'
            + '<path d="M1756 22l9 9v6h-17v-6z"/></g>';
        ruler.innerHTML = marks;
    </script>
</body>
</html>
